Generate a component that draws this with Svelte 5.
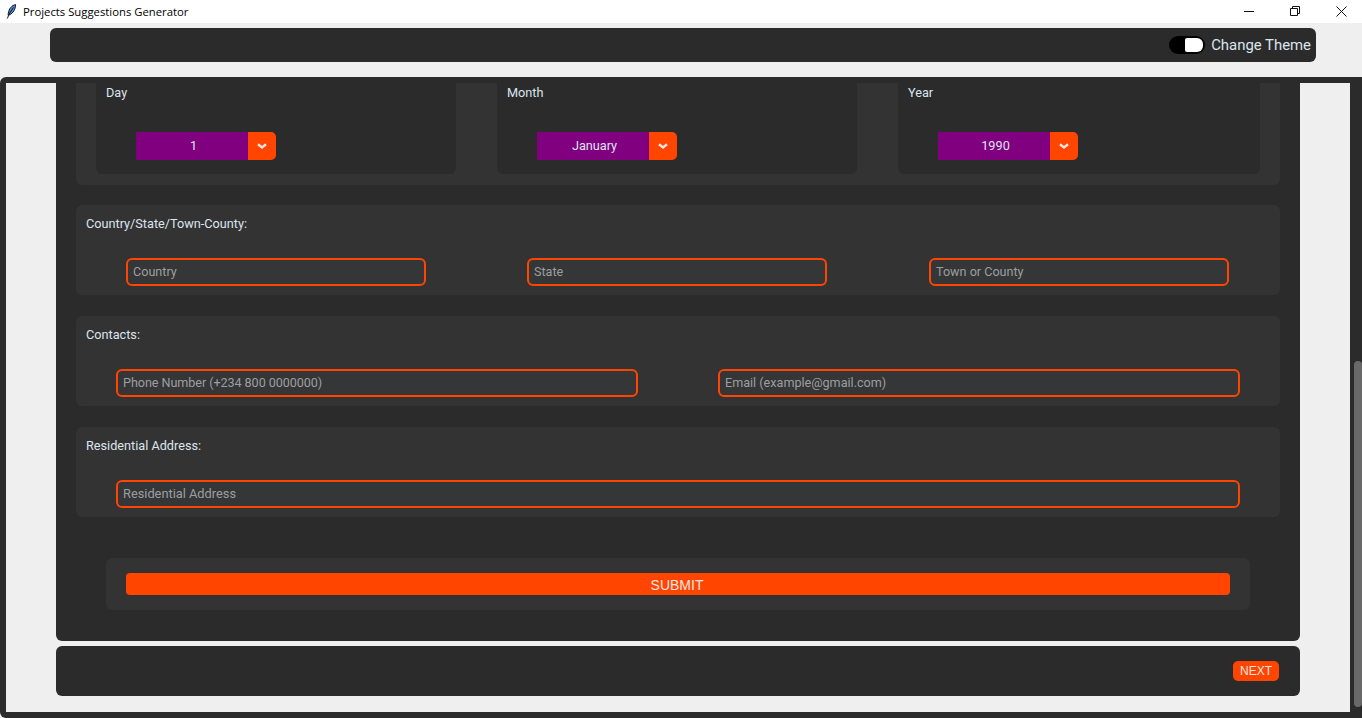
<script>
  const dateFields = [
    { label: 'Day', value: '1' },
    { label: 'Month', value: 'January' },
    { label: 'Year', value: '1990' }
  ];
  const places = ['Country', 'State', 'Town or County'];
  const contacts = ['Phone Number (+234 800 0000000)', 'Email (example@gmail.com)'];
</script>

<div class="window">
  <header class="titlebar">
    <svg class="feather" width="11" height="15" viewBox="0 0 11 15">
      <path d="M9.600.6C5.800 1.300 2.900 4.700 2.300 9.300l-.2 2 1.700-.6C7 9 9.700 5.200 9.600.6z" fill="#4f86cf" stroke="#141a26" stroke-width="1" />
      <path d="M7.500 3.500 3.600 9.200 1.300 14.500" fill="none" stroke="#141a26" stroke-width="1" />
    </svg>
    <span class="app-title">Projects Suggestions Generator</span>
    <div class="win-controls">
      <svg width="11" height="11" viewBox="0 0 11 11"><path d="M0 5.500h10" stroke="#111" fill="none" /></svg>
      <svg width="11" height="11" viewBox="0 0 11 11"><path d="M.5 2.500h7v7h-7zM2.500 2.500v-2h7v7h-2" stroke="#111" fill="none" /></svg>
      <svg width="11" height="11" viewBox="0 0 11 11"><path d="M.5.500l10 10M10.500.500l-10 10" stroke="#111" fill="none" /></svg>
    </div>
  </header>

  <div class="top-wrap">
    <div class="topbar">
      <span class="switch"><span class="knob"></span></span>
      <span class="theme-label">Change Theme</span>
    </div>
  </div>

  <div class="outer">
    <main class="viewport">
      <div class="column">
        <div class="scroll-area">
          <section class="panel date-panel">
            {#each dateFields as f}
              <div class="date-card">
                <span class="date-label">{f.label}</span>
                <div class="select">
                  <span class="select-value">{f.value}</span>
                  <span class="select-arrow">
                    <svg width="10" height="6" viewBox="0 0 10 6"><path d="M1 1.200 5 4.400l4-3.200" stroke="#f0e4de" stroke-width="2.400" fill="none" /></svg>
                  </span>
                </div>
              </div>
            {/each}
          </section>

          <section class="panel">
            <h3>Country/State/Town-County:</h3>
            <div class="row places">
              {#each places as p}
                <input class="entry" placeholder={p} />
              {/each}
            </div>
          </section>

          <section class="panel">
            <h3>Contacts:</h3>
            <div class="row contacts">
              {#each contacts as c}
                <input class="entry" placeholder={c} />
              {/each}
            </div>
          </section>

          <section class="panel">
            <h3>Residential Address:</h3>
            <div class="row address">
              <input class="entry" placeholder="Residential Address" />
            </div>
          </section>

          <div class="submit-panel">
            <button class="submit">SUBMIT</button>
          </div>
        </div>

        <div class="footer">
          <button class="next">NEXT</button>
        </div>
      </div>
    </main>
    <div class="scrollbar"><div class="thumb"></div></div>
  </div>
</div>

<style>
  :global(body) {
    margin: 0;
    background: #efefef;
    overflow: hidden;
  }

  .window {
    width: 1362px;
    height: 718px;
    display: flex;
    flex-direction: column;
    font-family: Roboto, "Liberation Sans", sans-serif;
    background: #efefef;
  }

  .titlebar {
    height: 23px;
    background: #fff;
    display: flex;
    align-items: center;
    padding-left: 6px;
  }

  .feather {
    flex: none;
    margin-right: 6px;
  }

  .app-title {
    font: 11.3px "Open Sans", "Noto Sans", sans-serif;
    color: #000;
  }

  .win-controls {
    margin-left: auto;
    display: flex;
    gap: 35px;
    padding-right: 15px;
  }

  .top-wrap {
    padding: 5px 46px 15px 50px;
  }

  .topbar {
    height: 34px;
    background: #2b2b2b;
    border-radius: 6px;
    display: flex;
    align-items: center;
    justify-content: flex-end;
    padding-right: 5px;
  }

  .switch {
    width: 36px;
    height: 18px;
    border-radius: 9px;
    background: #000;
    position: relative;
    margin-right: 6px;
  }

  .knob {
    position: absolute;
    right: 2px;
    top: 2px;
    width: 18px;
    height: 14px;
    background: #fff;
    border-radius: 2px 6px 6px 2px;
  }

  .theme-label {
    font-size: 14.9px;
    color: #dce4ee;
  }

  .outer {
    flex: 1;
    min-height: 0;
    background: #2b2b2b;
    border-radius: 6px 0 0 6px;
    padding: 6px 0 6px 6px;
    display: flex;
  }

  .viewport {
    width: 1344px;
    background: #efefef;
    padding: 0 50px;
    box-sizing: border-box;
  }

  .column {
    display: flex;
    flex-direction: column;
    gap: 5px;
    height: 613px;
  }

  .scroll-area {
    height: 558px;
    background: #2b2b2b;
    border-radius: 0 0 6px 6px;
    padding: 0 20px;
    box-sizing: border-box;
    overflow: hidden;
  }

  .panel {
    background: #333;
    border-radius: 6px;
    height: 90px;
    margin-bottom: 21px;
    padding: 10px;
    box-sizing: border-box;
  }

  h3 {
    margin: 0;
    font-size: 12.7px;
    font-weight: 400;
    line-height: 17px;
    color: #dce4ee;
  }

  .date-panel {
    height: 102px;
    margin-bottom: 20px;
    border-radius: 0 0 6px 6px;
    padding: 0 20px;
    display: flex;
    gap: 41px;
  }

  .date-card {
    width: 360px;
    height: 91px;
    background: #2b2b2b;
    border-radius: 0 0 6px 6px;
    padding: 2px 10px 0;
    box-sizing: border-box;
  }

  .date-card:last-child {
    width: 362px;
  }

  .date-label {
    display: block;
    font-size: 12.7px;
    line-height: 15px;
    color: #dce4ee;
  }

  .select {
    margin: 32px 0 0 30px;
    width: 140px;
    height: 28px;
    display: flex;
    background: #800080;
    border-radius: 0 6px 6px 0;
  }

  .select-value {
    width: 112px;
    padding-left: 3px;
    box-sizing: border-box;
    text-align: center;
    font-size: 12.7px;
    line-height: 27px;
    color: #dce4ee;
  }

  .select-arrow {
    width: 28px;
    background: #ff4500;
    border-radius: 0 5px 5px 0;
    display: flex;
    align-items: center;
    justify-content: center;
  }

  .row {
    display: flex;
    margin-top: 26px;
  }

  .places {
    padding-left: 40px;
    gap: 101px;
  }

  .places .entry {
    width: 300px;
  }

  .places .entry:last-child {
    margin-left: 1px;
  }

  .contacts {
    padding-left: 30px;
    gap: 80px;
  }

  .contacts .entry {
    width: 522px;
  }

  .contacts .entry:first-child {
    letter-spacing: -0.06px;
  }

  .address {
    padding-left: 30px;
  }

  .address .entry {
    width: 1124px;
    font-size: 12.8px;
  }

  .entry {
    height: 28px;
    box-sizing: border-box;
    border: 2px solid #ff4500;
    border-radius: 6px;
    background: #343638;
    padding: 0 5px 2px;
    font: 12.6px Roboto, sans-serif;
    color: #dce4ee;
    outline: none;
  }

  .entry::placeholder {
    color: #9e9e9e;
    opacity: 1;
  }

  .submit-panel {
    margin: 41px 30px 0;
    height: 52px;
    background: #333;
    border-radius: 6px;
    padding: 15px 20px;
    box-sizing: border-box;
  }

  .submit {
    display: block;
    width: 100%;
    height: 22px;
    border: 0;
    padding: 1px 2px 0 0;
    border-radius: 4px;
    background: #ff4500;
    color: #f2e6e0;
    font: 14px "Liberation Sans", sans-serif;
  }

  .footer {
    height: 50px;
    background: #2b2b2b;
    border-radius: 6px;
    display: flex;
    align-items: center;
    justify-content: flex-end;
    padding: 0 21px;
  }

  .next {
    width: 46px;
    height: 20px;
    border: 0;
    padding: 0;
    border-radius: 5px;
    background: #ff4500;
    color: #f2e6e0;
    font: 12px "Liberation Sans", sans-serif;
  }

  .scrollbar {
    flex: 1;
    padding: 278px 0 5px 4px;
    box-sizing: border-box;
  }

  .thumb {
    height: 346px;
    background: #696969;
    border-radius: 4px;
  }
</style>
